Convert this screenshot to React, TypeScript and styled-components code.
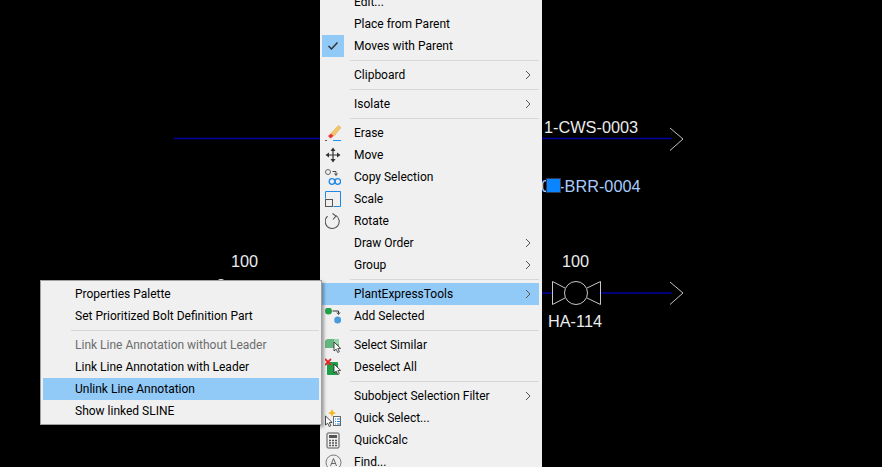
import styled, { createGlobalStyle } from "styled-components";
import type { ReactNode } from "react";

const GlobalStyle = createGlobalStyle`
  html, body {
    margin: 0;
    padding: 0;
    background: #000;
  }
`;

type Row =
  | { kind: "sep" }
  | { kind: "item"; label: string; sub?: boolean; active?: boolean; disabled?: boolean; icon?: ReactNode; checked?: boolean };

const sep: Row = { kind: "sep" };
const item = (label: string, opts: Partial<Extract<Row, { kind: "item" }>> = {}): Row => ({ kind: "item", label, ...opts });

const EraseIcon = () => (
  <svg width="16" height="16" viewBox="0 0 16 16">
    <path d="M6 8.5 L13.5 0.5 L16 2.5 L9 11 Z" fill="#f2c66d" stroke="#e6a93a" strokeWidth=".6" />
    <path d="M3 11 L6 8.5 L8.5 11 L5.5 13.5 Z" fill="#e8383a" />
    <path d="M0 15.5 H2" stroke="#555" />
    <path d="M8 15.5 H16" stroke="#1e90ff" />
  </svg>
);

const MoveIcon = () => (
  <svg width="16" height="16" viewBox="0 0 16 16" fill="#333">
    <path d="M8 0.5 L10.5 4 H5.5 Z M8 15.5 L10.5 12 H5.5 Z M0.5 8 L4 5.5 V10.5 Z M15.5 8 L12 5.5 V10.5 Z" />
    <path d="M8 3 V13 M3 8 H13" stroke="#333" strokeWidth="1.2" />
  </svg>
);

const CopyIcon = () => (
  <svg width="16" height="16" viewBox="0 0 16 16" fill="none">
    <circle cx="3" cy="3" r="2.5" stroke="#666" />
    <path d="M7.5 2.5 H11 V6" stroke="#444" />
    <path d="M9.5 4.5 L11 6.5 L12.5 4.5" stroke="#444" />
    <circle cx="7" cy="12.5" r="2.8" stroke="#1e88e5" strokeWidth="1.3" />
    <circle cx="12.8" cy="12.5" r="2.8" stroke="#1e88e5" strokeWidth="1.3" />
  </svg>
);

const ScaleIcon = () => (
  <svg width="16" height="16" viewBox="0 0 16 16" fill="none">
    <path d="M0.5 7.5 V0.5 H15.5 V15.5 H8.5" stroke="#1e88e5" />
    <rect x="0.5" y="8.5" width="7" height="7" stroke="#555" />
  </svg>
);

const RotateIcon = () => (
  <svg width="16" height="16" viewBox="0 0 16 16" fill="none">
    <path d="M2.6 3.2 A7 7 0 1 0 11 2.6" stroke="#555" strokeWidth="1.1" />
    <path d="M7.5 0.5 L11 3 L8 6.5" stroke="#555" strokeWidth="1.1" />
  </svg>
);

const AddIcon = () => (
  <svg width="16" height="16" viewBox="0 0 16 16" fill="none">
    <circle cx="3.5" cy="3" r="3.5" fill="#22a04a" />
    <path d="M7.5 3 H13.5 V5.5" stroke="#333" />
    <path d="M12 4.5 L13.5 6.5 L15 4.5" stroke="#333" />
    <circle cx="12.7" cy="12" r="3.5" fill="#4a9bdc" />
  </svg>
);

const Pointer = ({ x, y }: { x: number; y: number }) => (
  <path
    transform={`translate(${x} ${y})`}
    d="M0 0 V9 L2.2 7.2 L3.8 10.5 L5.4 9.6 L3.8 6.6 L6.6 6.4 Z"
    fill="#fff"
    stroke="#222"
    strokeWidth=".8"
  />
);

const SimilarIcon = () => (
  <svg width="16" height="16" viewBox="0 0 16 16">
    <path d="M0 4 L2 2 H14 V11 H0 Z" fill="#66b680" />
    <path d="M9 2 H14 V7 H9 Z" fill="#9ad4ad" />
    <Pointer x={9} y={5} />
  </svg>
);

const DeselectIcon = () => (
  <svg width="16" height="18" viewBox="0 0 16 18">
    <rect x="2" y="4" width="11" height="13" fill="#1f9e48" rx="1" />
    <path d="M0 1 L6 7 M6 1 L0 7" stroke="#e8262a" strokeWidth="1.8" />
    <Pointer x={9} y={6} />
  </svg>
);

const QuickSelectIcon = () => (
  <svg width="16" height="20" viewBox="0 0 16 20" fill="none">
    <path d="M7 1 L8.2 3.8 L11 5 L8.2 6.2 L7 9 L5.8 6.2 L3 5 L5.8 3.8 Z" fill="#f4b820" />
    <rect x="8.5" y="8.5" width="7" height="9" fill="#fff" stroke="#666" />
    <path d="M10 11 H11 M12 11 H15 M10 13.5 H11 M12 13.5 H15 M10 16 H11 M12 16 H15" stroke="#1e88e5" />
    <Pointer x={0.5} y={8} />
  </svg>
);

const CalcIcon = () => (
  <svg width="14" height="17" viewBox="0 0 14 17" fill="none">
    <rect x="1" y="1" width="12" height="15" rx="1" stroke="#555" />
    <rect x="3" y="3" width="8" height="3" fill="#555" />
    <path d="M3 8.5 H5 M6 8.5 H8 M9 8.5 H11 M3 11 H5 M6 11 H8 M9 11 H11 M3 13.5 H5 M6 13.5 H8 M9 13.5 H11" stroke="#555" strokeWidth="1.4" />
  </svg>
);

const FindIcon = () => (
  <svg width="17" height="17" viewBox="0 0 17 17" fill="none">
    <circle cx="8.5" cy="8.5" r="7.5" stroke="#777" />
    <path d="M5.5 12 L8.5 4.5 L11.5 12 M6.5 9.5 H10.5" stroke="#666" />
  </svg>
);

const CheckIcon = () => (
  <svg width="12" height="10" viewBox="0 0 12 10" fill="none">
    <path d="M1.5 5 L4.5 8 L10.5 1.5" stroke="#333" strokeWidth="1.5" />
  </svg>
);

const mainRows: Row[] = [
  item("Edit..."),
  item("Place from Parent"),
  item("Moves with Parent", { checked: true }),
  sep,
  item("Clipboard", { sub: true }),
  sep,
  item("Isolate", { sub: true }),
  sep,
  item("Erase", { icon: <EraseIcon /> }),
  item("Move", { icon: <MoveIcon /> }),
  item("Copy Selection", { icon: <CopyIcon /> }),
  item("Scale", { icon: <ScaleIcon /> }),
  item("Rotate", { icon: <RotateIcon /> }),
  item("Draw Order", { sub: true }),
  item("Group", { sub: true }),
  sep,
  item("PlantExpressTools", { sub: true, active: true }),
  item("Add Selected", { icon: <AddIcon /> }),
  sep,
  item("Select Similar", { icon: <SimilarIcon /> }),
  item("Deselect All", { icon: <DeselectIcon /> }),
  sep,
  item("Subobject Selection Filter", { sub: true }),
  item("Quick Select...", { icon: <QuickSelectIcon /> }),
  item("QuickCalc", { icon: <CalcIcon /> }),
  item("Find...", { icon: <FindIcon /> }),
];

const subRows: Row[] = [
  item("Properties Palette"),
  item("Set Prioritized Bolt Definition Part"),
  sep,
  item("Link Line Annotation without Leader", { disabled: true }),
  item("Link Line Annotation with Leader"),
  item("Unlink Line Annotation", { active: true }),
  item("Show linked SLINE"),
];

const MenuList = ({ rows }: { rows: Row[] }) => (
  <>
    {rows.map((row, idx) =>
      row.kind === "sep" ? (
        <Separator key={idx} />
      ) : (
        <Item key={idx} $active={row.active} $disabled={row.disabled}>
          <IconCell>
            {row.checked ? <CheckBox><CheckIcon /></CheckBox> : row.icon}
          </IconCell>
          <ItemLabel>{row.label}</ItemLabel>
          {row.sub && (
            <SubArrow viewBox="0 0 6 10" fill="none">
              <path d="M1 1 L5 5 L1 9" stroke="#555" />
            </SubArrow>
          )}
        </Item>
      ),
    )}
  </>
);

const App = () => (
  <Stage>
    <GlobalStyle />
    <Drawing width="882" height="467" viewBox="0 0 882 467" fill="none">
      <path d="M174 138.5 H320 M542 138.5 H672 M600 293 H672 M536 293 H552" stroke="#0000a0" strokeWidth="1.5" />
      <path d="M670 128 L683 139 L670 150.5 M670 282 L683 293 L670 304.5" stroke="#c4c4c4" />
      <circle cx="576" cy="293" r="11.5" stroke="#c8c8c8" />
      <path d="M565 288 L552.5 281.5 V304.5 L565 298 M587 288 L600.5 281.5 V304.5 L587 298" stroke="#c8c8c8" />
      <circle cx="221" cy="283" r="4" fill="#e8e8e8" />
    </Drawing>

    <Label $x={231} $y={251}>100</Label>
    <Label $x={562} $y={251}>100</Label>
    <Label $x={548} $y={311}>HA-114</Label>
    <Label $x={544} $y={117}>1-CWS-0003</Label>
    <Label $x={541} $y={176} $color="#a8ccff">00-BRR-0004</Label>
    <Grip />

    <MainMenu>
      <MenuList rows={mainRows} />
    </MainMenu>
    <SubMenu>
      <MenuList rows={subRows} />
    </SubMenu>
  </Stage>
);

export default App;

const Stage = styled.div`
  position: relative;
  width: 882px;
  height: 467px;
  overflow: hidden;
  background: #000;
  font-family: Roboto, "Liberation Sans", sans-serif;
`;

const Drawing = styled.svg`
  position: absolute;
  inset: 0;
`;

const Label = styled.div<{ $x: number; $y: number; $color?: string }>`
  position: absolute;
  left: ${({ $x }) => $x}px;
  top: ${({ $y }) => $y}px;
  font-family: "Liberation Sans", sans-serif;
  font-size: 16.3px;
  line-height: 20px;
  color: ${({ $color }) => $color || "#ececec"};
  white-space: nowrap;
`;

const Grip = styled.div`
  position: absolute;
  left: 546px;
  top: 178px;
  width: 13px;
  height: 13px;
  background: #0a84ff;
  border: 1px solid #2a3a55;
`;

const MainMenu = styled.div`
  position: absolute;
  left: 320px;
  top: -9px;
  width: 222px;
  box-sizing: border-box;
  padding: 0 3px 0 2px;
  background: #f0f0f0;
`;

const SubMenu = styled.div`
  position: absolute;
  left: 40px;
  top: 280px;
  width: 282px;
  box-sizing: border-box;
  padding: 2px;
  background: #f0f0f0;
  border: 1px solid #a0a0a0;
  box-shadow: 2px 2px 3px rgba(0, 0, 0, 0.35);
`;

const Item = styled.div<{ $active?: boolean; $disabled?: boolean }>`
  display: flex;
  align-items: center;
  height: 22px;
  padding-right: 8px;
  font-size: 12px;
  white-space: nowrap;
  color: ${({ $disabled }) => ($disabled ? "#6d6d6d" : "#000")};
  background: ${({ $active }) => ($active ? "#91c9f7" : "transparent")};
`;

const IconCell = styled.div`
  flex: 0 0 22px;
  height: 22px;
  margin-right: 10px;
  display: flex;
  align-items: center;
  justify-content: center;
`;

const ItemLabel = styled.span`
  flex: 1;
`;

const Separator = styled.div`
  height: 1px;
  margin: 3px 0 3px 28px;
  background: #d7d7d7;
`;

const CheckBox = styled.div`
  width: 22px;
  height: 22px;
  display: flex;
  align-items: center;
  justify-content: center;
  background: #91c9f7;
`;

const SubArrow = styled.svg`
  width: 6px;
  height: 10px;
`;
